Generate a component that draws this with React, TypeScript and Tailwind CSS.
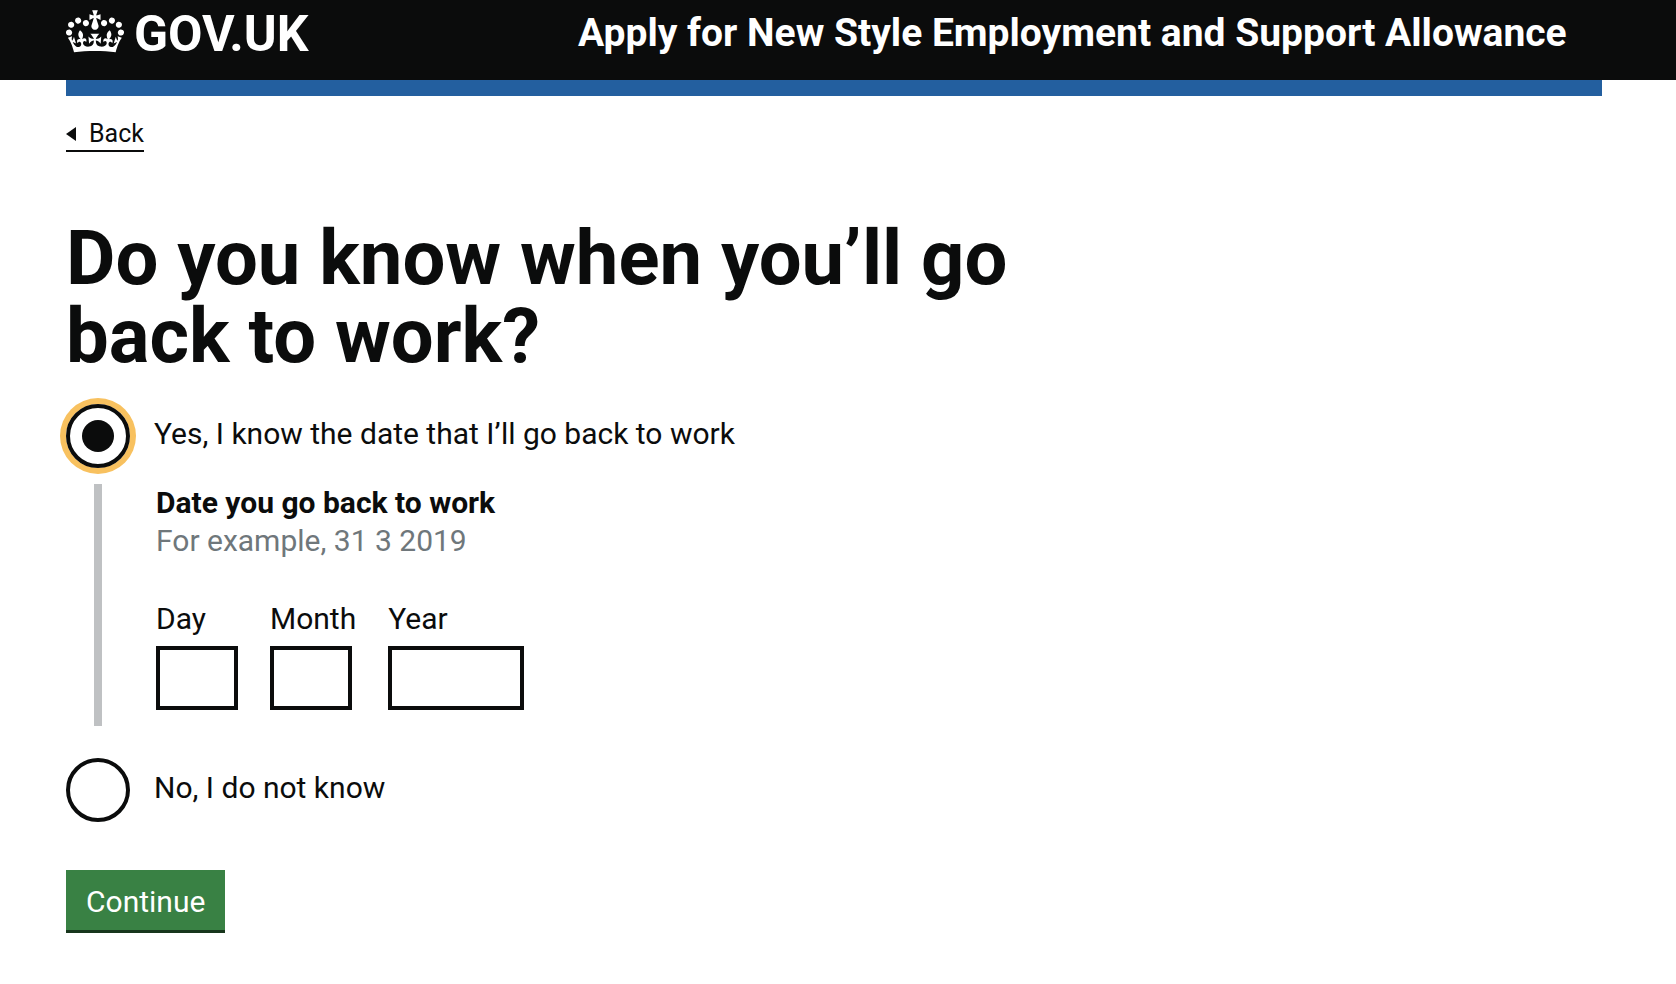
import { useState } from "react";

function Crown() {
  return (
    <svg viewBox="0 0 132 97" className="h-[43px] w-[58px] shrink-0" fill="currentColor" aria-hidden="true">
      <path
        fillRule="evenodd"
        d="M25 30.2c3.5 1.5 7.7-.2 9.1-3.7 1.5-3.6-.2-7.8-3.9-9.2-3.6-1.4-7.6.3-9.1 3.9-1.4 3.5.3 7.5 3.9 9zM9 39.5c3.6 1.5 7.8-.2 9.2-3.7 1.5-3.6-.2-7.8-3.9-9.1-3.6-1.5-7.6.2-9.1 3.8-1.4 3.5.3 7.5 3.8 9zM4.4 57.2c3.5 1.5 7.7-.2 9.1-3.8 1.5-3.6-.2-7.7-3.9-9.1-3.5-1.5-7.6.3-9.1 3.8-1.4 3.5.3 7.6 3.9 9.1zm38.3-21.4c3.5 1.5 7.7-.2 9.1-3.8 1.5-3.6-.2-7.7-3.9-9.1-3.6-1.5-7.6.3-9.1 3.8-1.3 3.6.4 7.7 3.9 9.1zm64.4-5.6c-3.6 1.5-7.8-.2-9.1-3.7-1.5-3.6.2-7.8 3.8-9.2 3.6-1.4 7.7.3 9.2 3.9 1.3 3.5-.4 7.5-3.9 9zm15.9 9.3c-3.6 1.5-7.7-.2-9.1-3.7-1.5-3.6.2-7.8 3.7-9.1 3.6-1.5 7.7.2 9.2 3.8 1.5 3.5-.3 7.5-3.8 9zm4.7 17.7c-3.6 1.5-7.8-.2-9.2-3.8-1.5-3.6.2-7.7 3.9-9.1 3.6-1.5 7.7.3 9.2 3.8 1.3 3.5-.4 7.6-3.9 9.1zM89.3 35.8c-3.6 1.5-7.8-.2-9.2-3.8-1.4-3.6.2-7.7 3.9-9.1 3.6-1.5 7.7.3 9.2 3.8 1.4 3.6-.3 7.7-3.9 9.1zM69.7 17.7l8.9 4.7V9.3l-8.9 2.8c-.2-.3-.5-.6-.9-.9L72.4 0H59.6l3.5 11.2c-.3.3-.6.5-.9.9l-8.8-2.8v13.1l8.8-4.7c.3.3.6.7.9.9l-5 15.4v.1c-.2.8-.4 1.6-.4 2.4 0 4.1 3.1 7.5 7 8.1h.2c.3 0 .7.1 1 .1.4 0 .7 0 1-.1h.2c4-.6 7.1-4.1 7.1-8.1 0-.8-.1-1.7-.4-2.4V34l-5.1-15.4c.4-.2.7-.6 1-.9zM66 92.8c16.9 0 32.8 1.1 47.1 3.2 4-16.9 8.9-26.7 14-33.5l-9.6-3.4c1 4.9 1.1 7.2 0 10.2-1.5-1.4-3-4.3-4.2-8.7L108.6 76c2.8-2 5-3.2 7.5-3.3-4.4 9.4-10 11.9-13.6 11.2-4.3-.8-6.3-4.6-5.6-7.9 1-4.7 5.7-5.9 8-.5 4.3-8.7-3-11.4-7.6-8.8 7.1-7.2 7.9-13.5 2.1-21.1-8 6.1-8.1 12.3-4.5 20.8-4.7-5.4-12.1-2.5-9.5 6.2 3.4-5.2 7.9-2 7.2 3.1-.6 4.3-6.4 7.8-13.5 7.2-10.3-.9-10.9-8-11.2-13.8 2.5-.5 7.1 1.8 11 7.3L80.2 60c-4.1 4.4-8 5.3-12.3 5.4 1.4-4.4 8-11.6 8-11.6H55.5s6.4 7.2 7.9 11.6c-4.2-.1-8-1-12.3-5.4l1.4 16.4c3.9-5.5 8.5-7.7 10.9-7.3-.3 5.8-.9 12.8-11.1 13.8-7.2.6-12.9-2.9-13.5-7.2-.7-5 3.8-8.3 7.1-3.1 2.7-8.7-4.6-11.6-9.4-6.2 3.7-8.5 3.6-14.7-4.6-20.8-5.8 7.6-5 13.9 2.2 21.1-4.7-2.6-11.9.1-7.7 8.8 2.3-5.5 7.1-4.2 8.1.5.7 3.3-1.3 7.1-5.7 7.9-3.5.7-9-1.8-13.5-11.2 2.5.1 4.7 1.3 7.5 3.3l-4.7-15.4c-1.2 4.4-2.7 7.2-4.3 8.7-1.1-3-.9-5.3 0-10.2l-9.5 3.4c5 6.9 9.9 16.7 14 33.5 14.8-2.1 30.8-3.2 47.7-3.2z"
      />
    </svg>
  );
}

type RadioProps = {
  id: string;
  label: string;
  checked: boolean;
  focused?: boolean;
  onSelect: () => void;
};

function Radio({ id, label, checked, focused = false, onSelect }: RadioProps) {
  return (
    <div className="flex items-center">
      <span className={`grid size-16 shrink-0 rounded-full ${focused ? "ring-[6px] ring-[#f8c15f]" : ""}`}>
        <input
          id={id}
          type="radio"
          name="knows-date"
          checked={checked}
          onChange={onSelect}
          className="peer col-start-1 row-start-1 size-16 cursor-pointer appearance-none rounded-full border-4 border-[#0b0c0c] bg-white outline-none"
        />
        <span className="pointer-events-none col-start-1 row-start-1 hidden size-8 place-self-center rounded-full bg-[#0b0c0c] peer-checked:block" />
      </span>
      <label htmlFor={id} className="cursor-pointer pb-1 pl-6 text-[30px] leading-[38px]">
        {label}
      </label>
    </div>
  );
}

type DateFieldProps = { id: string; label: string; wide?: boolean };

function DateField({ id, label, wide = false }: DateFieldProps) {
  return (
    <div className="flex min-w-[82px] flex-col gap-2">
      <label htmlFor={id} className="text-[30px] leading-[38px]">
        {label}
      </label>
      <input
        id={id}
        type="text"
        inputMode="numeric"
        className={`h-16 border-4 border-[#0b0c0c] bg-white px-2 text-[30px] outline-none ${wide ? "w-[136px]" : "w-[82px]"}`}
      />
    </div>
  );
}

export default function App() {
  const [answer, setAnswer] = useState("yes");

  return (
    <div className="min-h-screen bg-white font-['Roboto','Liberation_Sans',sans-serif] text-[#0b0c0c]">
      <header className="bg-[#0b0c0c] text-white">
        <div className="mr-[74px] ml-[66px] flex h-20 items-start">
          <a href="#" className="flex w-[512px] shrink-0 items-start pt-[10px]">
            <Crown />
            <span className="pl-[10px] text-[50px] leading-[48px] font-bold">GOV.UK</span>
          </a>
          <a href="#" className="pt-2 text-[39px] leading-[50px] font-bold whitespace-nowrap">
            Apply for New Style Employment and Support Allowance
          </a>
        </div>
      </header>

      <div className="mr-[74px] ml-[66px]">
        <div className="h-4 bg-[#235f9f]" />

        <a
          href="#"
          className="mt-[22px] flex w-fit items-center gap-[13px] border-b-2 border-[#0b0c0c] text-[25px] leading-8"
        >
          <svg viewBox="0 0 10 14" className="h-[14px] w-[10px]" fill="currentColor" aria-hidden="true">
            <path d="M0 7 10 0v14z" />
          </svg>
          Back
        </a>

        <main className="pt-[67px]">
          <form onSubmit={(event) => event.preventDefault()}>
            <fieldset>
              <legend className="max-w-[980px] text-[76px] leading-[78px] font-bold">
                Do you know when you’ll go back to work?
              </legend>

              <div className="pt-[29px]">
                <Radio
                  id="know-yes"
                  label="Yes, I know the date that I’ll go back to work"
                  checked={answer === "yes"}
                  focused={answer === "yes"}
                  onSelect={() => setAnswer("yes")}
                />

                <div className="mt-4 ml-7 border-l-8 border-[#bfc1c3] pb-4 pl-[54px]">
                  <fieldset>
                    <legend className="text-[30px] leading-[38px] font-bold">Date you go back to work</legend>
                    <p className="text-[30px] leading-[38px] text-[#6f777b]">For example, 31 3 2019</p>
                    <div className="flex gap-8 pt-10">
                      <DateField id="date-day" label="Day" />
                      <DateField id="date-month" label="Month" />
                      <DateField id="date-year" label="Year" wide />
                    </div>
                  </fieldset>
                </div>

                <div className="pt-8">
                  <Radio
                    id="know-no"
                    label="No, I do not know"
                    checked={answer === "no"}
                    onSelect={() => setAnswer("no")}
                  />
                </div>
              </div>
            </fieldset>

            <button
              type="submit"
              className="mt-12 h-[60px] cursor-pointer bg-[#398144] px-5 pt-1 text-[30px] leading-[38px] text-white shadow-[0_3px_0_#17361c]"
            >
              Continue
            </button>
          </form>
        </main>
      </div>
    </div>
  );
}
